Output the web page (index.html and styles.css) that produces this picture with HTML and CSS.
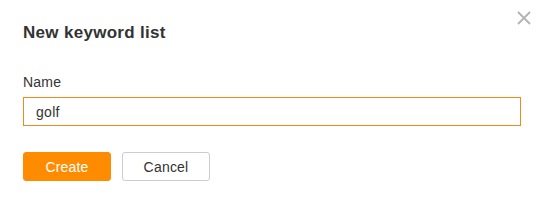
FILE: index.html
```html
<!DOCTYPE html>
<html lang="en">
<head>
  <meta charset="UTF-8">
  <title>New keyword list</title>
  <link rel="stylesheet" href="styles.css">
</head>
<body>
  <div class="dialog">
    <button class="close-btn" aria-label="Close">
      <svg width="14" height="14" viewBox="0 0 14 14">
        <path d="M1 1 L13 13 M13 1 L1 13" stroke="#b3b3b3" stroke-width="1.8" fill="none"/>
      </svg>
    </button>
    <h2 class="dialog-title">New keyword list</h2>
    <label class="field-label" for="name">Name</label>
    <input class="field-input" id="name" type="text" value="golf">
    <div class="actions">
      <button class="btn btn-primary">Create</button>
      <button class="btn btn-default">Cancel</button>
    </div>
  </div>
</body>
</html>
```

FILE: styles.css
```css
* {
  box-sizing: border-box;
}
body {
  margin: 0;
  background: #fff;
  font-family: "Liberation Sans", Arial, sans-serif;
  color: #333;
}
.dialog {
  position: relative;
  width: 541px;
  height: 205px;
  padding: 23px 20px 0 23px;
}
.close-btn {
  position: absolute;
  top: 11px;
  right: 10px;
  padding: 0;
  border: none;
  background: none;
  cursor: pointer;
  line-height: 0;
}
.dialog-title {
  margin: 0;
  font-size: 17px;
  font-weight: bold;
  letter-spacing: 0.3px;
  line-height: 20px;
}
.field-label {
  display: block;
  margin-top: 31px;
  font-size: 14px;
  letter-spacing: 0.2px;
  line-height: 16px;
}
.field-input {
  display: block;
  width: 498px;
  height: 29px;
  margin-top: 7px;
  padding: 0 12px;
  border: 1px solid #f08a1d;
  border-radius: 0;
  outline: none;
  font-family: inherit;
  font-size: 14px;
  letter-spacing: 0.3px;
  color: #333;
}
.actions {
  display: flex;
  gap: 11px;
  margin-top: 26px;
}
.btn {
  width: 88px;
  height: 29px;
  border-radius: 3px;
  font-family: inherit;
  font-size: 14px;
  letter-spacing: 0.2px;
  cursor: pointer;
}
.btn-primary {
  background: #ff8c00;
  border: 1px solid #ff8c00;
  color: #fff;
}
.btn-default {
  background: #fff;
  border: 1px solid #ccc;
  color: #333;
}
```
